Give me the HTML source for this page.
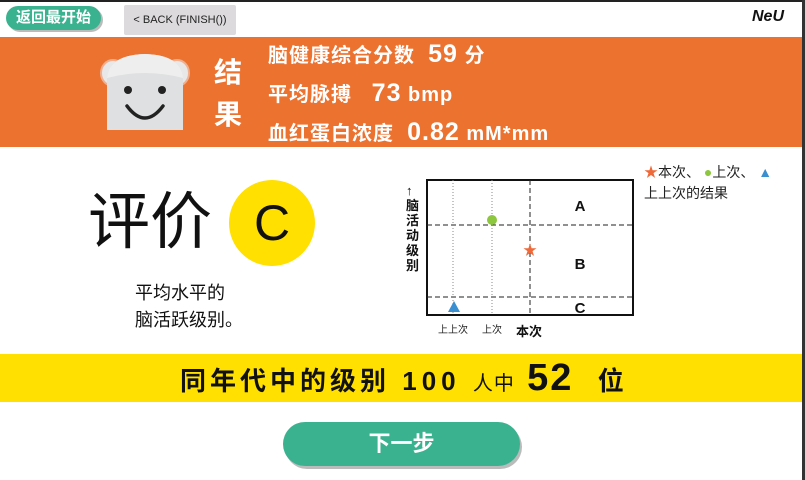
<!DOCTYPE html><html><head><meta charset="utf-8"><style>
*{margin:0;padding:0;box-sizing:border-box}
body{width:805px;height:480px;background:#fff;position:relative;overflow:hidden;font-family:"Liberation Sans","Noto Sans CJK SC",sans-serif}
.a{position:absolute}
</style></head><body>
<div class="a" style="left:0;top:0;width:805px;height:2px;background:#222"></div>
<div class="a" style="right:0;top:0;width:3px;height:480px;background:#333"></div>
<div class="a" style="left:6px;top:6px;width:95px;height:24px;border-radius:12px;background:#3bb28f;box-shadow:2px 2px 0 #bbb;color:#fff;font-weight:bold;font-size:15px;line-height:24px;text-align:center">返回最开始</div>
<div class="a" style="left:124px;top:5px;width:112px;height:30px;background:#dcdadd;border-radius:2px;font-size:11px;line-height:30px;text-align:center;color:#222">&lt; BACK (FINISH())</div>
<div class="a" style="left:752px;top:8px;font-size:16px;font-weight:bold;font-style:italic;color:#111">NeU</div>
<div class="a" style="left:0;top:37px;width:802px;height:110px;background:#ec722f"></div>
<svg class="a" style="left:95px;top:50px" width="100" height="82" viewBox="0 0 100 82">
<ellipse cx="18" cy="23" rx="12" ry="13" fill="#e8e8e8" stroke="#f0b090" stroke-width="2"/>
<ellipse cx="82" cy="23" rx="12" ry="13" fill="#e8e8e8" stroke="#f0b090" stroke-width="2"/>
<path d="M12 28 Q14 5 50 4 Q86 5 88 28 L88 80 L12 80 Z" fill="#dfe0e1"/>
<path d="M12 28 Q14 5 50 4 Q86 5 88 28 Q50 18 12 28Z" fill="#eee"/>
<circle cx="33" cy="40" r="4" fill="#222"/><circle cx="67" cy="40" r="4" fill="#222"/>
<path d="M32 56 Q50 80 68 56" fill="none" stroke="#222" stroke-width="3.5" stroke-linecap="round"/>
</svg>
<div class="a" style="left:214px;top:52px;color:#fff;font-size:28px;font-weight:bold;line-height:42px;width:32px">结<br>果</div>
<div class="a" style="left:268px;top:36px;color:#fff;font-weight:bold;font-size:20px;line-height:37px;white-space:nowrap;letter-spacing:1px">
<div>脑健康综合分数 &nbsp;<span style="font-size:25px">59</span> 分</div>
<div>平均脉搏 &nbsp;&nbsp;<span style="font-size:25px">73</span> bmp</div>
<div>血红蛋白浓度 &nbsp;<span style="font-size:25px">0.82</span> mM*mm</div></div>
<div class="a" style="left:88px;top:183px;font-size:62px;line-height:80px;color:#111">评价</div>
<div class="a" style="left:229px;top:180px;width:86px;height:86px;border-radius:50%;background:#ffe000;font-size:50px;line-height:86px;text-align:center;color:#111">C</div>
<div class="a" style="left:135px;top:280px;font-size:18px;line-height:27px;color:#111">平均水平的<br>脑活跃级别。</div>
<div class="a" style="left:406px;top:183px;font-size:13px;font-weight:bold;line-height:15px;width:14px;color:#111">↑<br>脑<br>活<br>动<br>级<br>别</div>
<svg class="a" style="left:425px;top:178px" width="212" height="140">
<rect x="2" y="2" width="206" height="135" fill="none" stroke="#111" stroke-width="2"/>
<line x1="2" y1="47" x2="208" y2="47" stroke="#222" stroke-dasharray="5,3"/>
<line x1="2" y1="119" x2="208" y2="119" stroke="#222" stroke-dasharray="5,3"/>
<line x1="28" y1="2" x2="28" y2="137" stroke="#888" stroke-dasharray="1,2"/>
<line x1="67" y1="2" x2="67" y2="137" stroke="#888" stroke-dasharray="1,2"/>
<line x1="105" y1="2" x2="105" y2="137" stroke="#222" stroke-dasharray="5,3"/>
<circle cx="67" cy="42" r="5" fill="#8dc63f"/>
<text x="105" y="77" fill="#ee6a3a" font-size="14" text-anchor="middle">★</text>
<polygon points="29,123 23,134 35,134" fill="#3a8fd0"/>
<text x="155" y="33" font-size="15" font-weight="bold" text-anchor="middle" fill="#111">A</text>
<text x="155" y="91" font-size="15" font-weight="bold" text-anchor="middle" fill="#111">B</text>
<text x="155" y="135" font-size="15" font-weight="bold" text-anchor="middle" fill="#111">C</text>
</svg>
<div class="a" style="left:438px;top:321px;font-size:10px;color:#222">上上次</div>
<div class="a" style="left:482px;top:321px;font-size:10px;color:#222">上次</div>
<div class="a" style="left:516px;top:321px;font-size:13px;font-weight:bold;color:#111">本次</div>
<div class="a" style="left:644px;top:162px;font-size:14px;line-height:21px;color:#222;white-space:nowrap"><span style="color:#ee6a3a">★</span>本次、 <span style="color:#8dc63f">●</span>上次、 <span style="color:#3a8fd0">▲</span><br>上上次的结果</div>
<div class="a" style="left:0;top:354px;width:802px;height:48px;background:#ffe000"></div>
<div class="a" style="left:180px;top:354px;height:48px;line-height:48px;font-weight:bold;color:#111;font-size:26px;white-space:nowrap;letter-spacing:5px"><span style="letter-spacing:4px">同年代中的级别</span> 100 <span style="font-size:20px;font-weight:normal;letter-spacing:1px">人中</span> <span style="font-size:38px;letter-spacing:2px">52</span> &nbsp;位</div>
<div class="a" style="left:283px;top:422px;width:237px;height:44px;border-radius:22px;background:#3bb28f;box-shadow:2px 3px 0 #bbb;color:#fff;font-weight:bold;font-size:22px;line-height:44px;text-align:center">下一步</div>
</body></html>
